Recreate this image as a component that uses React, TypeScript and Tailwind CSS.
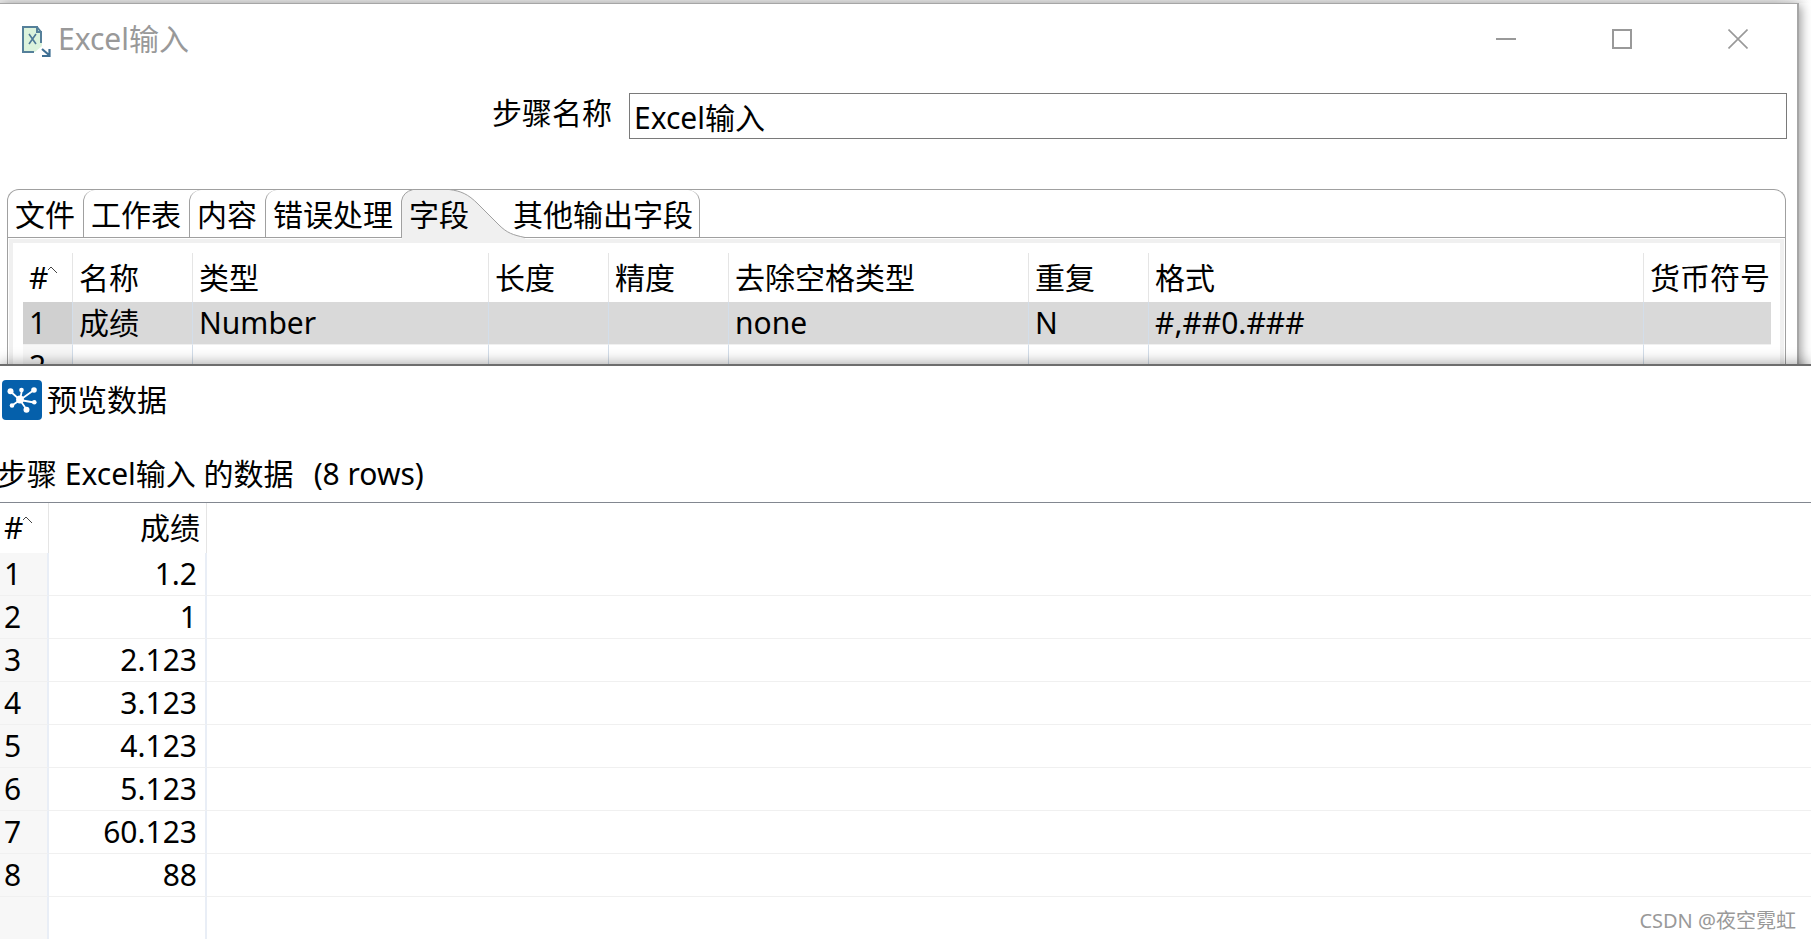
import { useState } from "react";

type Column = {
  label: string;
  width: string;
};

const columns: Column[] = [
  { label: "名称", width: "w-[120px]" },
  { label: "类型", width: "w-[296px]" },
  { label: "长度", width: "w-[120px]" },
  { label: "精度", width: "w-[120px]" },
  { label: "去除空格类型", width: "w-[300px]" },
  { label: "重复", width: "w-[120px]" },
  { label: "格式", width: "" },
  { label: "货币符号", width: "w-[127px]" },
];

const fields = [
  ["成绩", "Number", "", "", "none", "N", "#,##0.###", ""],
  ["", "", "", "", "", "", "", ""],
];

const scores = ["1.2", "1", "2.123", "3.123", "4.123", "5.123", "60.123", "88"];

const tabs = ["文件", "工作表", "内容", "错误处理", "字段", "其他输出字段"];

function ExcelIcon() {
  return (
    <svg width="30" height="36" viewBox="0 -4 30 36" fill="none">
      <path d="M1 2h14l5 5v14l-7 6H1z" fill="#dcf3dc" />
      <path d="M12 27H1V2h14v5h4v11M15 2l4 5" stroke="#55809a" strokeWidth="2" />
      <path d="M7 9l7 10M14 9L7 19" stroke="#4d7896" strokeWidth="1.6" />
      <path d="M20 24l7 6M20 31h7.500V24" stroke="#3f6f93" strokeWidth="2.2" />
    </svg>
  );
}

function KettleIcon() {
  return (
    <svg width="40" height="40" viewBox="0 0 40 40">
      <rect width="40" height="40" rx="4" fill="#0560ab" />
      <g stroke="#fff" strokeWidth="1.8">
        <path d="M18 20L8 11M18 20l2-10M18 20L32 10M18 20l14 2.500M18 20l6.500 9.500M18 20l-8 5.500" />
      </g>
      <g fill="#fff">
        <circle cx="18" cy="19.500" r="3.900" />
        <circle cx="8.500" cy="11.300" r="3" />
        <circle cx="19.500" cy="10" r="2.300" />
        <circle cx="32" cy="10" r="2.800" />
        <circle cx="32.300" cy="22.300" r="2.300" />
        <circle cx="24.500" cy="29.700" r="3" />
        <circle cx="10" cy="25.500" r="2.300" />
      </g>
    </svg>
  );
}

function SortHeader() {
  return (
    <span className="flex items-start">
      #
      <svg className="mt-2" width="10" height="8" viewBox="0 0 10 8" fill="none">
        <path d="M0 4l3-3 6 6" stroke="#444" strokeWidth="1" />
      </svg>
    </span>
  );
}

export default function App() {
  const [stepName, setStepName] = useState("Excel输入");
  const [activeTab, setActiveTab] = useState("字段");

  return (
    <div className="relative min-h-screen overflow-hidden bg-white font-['Noto_Sans','Noto_Sans_CJK_SC',sans-serif] text-[30px] leading-10 text-black">
      <div className="bg-linear-to-r from-[#e6e6e6] from-98% to-white pt-[3px]">
        <div className="bg-white pr-3">
          <section className="border-t border-r-2 border-[#a6a6a6] bg-white shadow-[2px_2px_10px_rgba(0,0,0,0.4)]">
            <header className="flex h-[70px] items-center pr-px pl-[22px] text-[#999]">
              <ExcelIcon />
              <h1 className="ml-1.5 grow">Excel输入</h1>
              <button type="button" aria-label="最小化" className="flex h-full w-[116px] items-center justify-center">
                <svg width="20" height="20" viewBox="0 0 20 20">
                  <path d="M0 10h20" stroke="#999" strokeWidth="2" />
                </svg>
              </button>
              <button type="button" aria-label="最大化" className="flex h-full w-[116px] items-center justify-center">
                <svg width="20" height="20" viewBox="0 0 20 20" fill="none">
                  <path d="M1 1h18v18H1z" stroke="#999" strokeWidth="2" />
                </svg>
              </button>
              <button type="button" aria-label="关闭" className="flex h-full w-[116px] items-center justify-center">
                <svg width="20" height="20" viewBox="0 0 20 20">
                  <path d="M0.500 0.500l19 19M19.500 0.500l-19 19" stroke="#999" strokeWidth="1.600" />
                </svg>
              </button>
            </header>

            <div className="mt-[19px] flex items-start pr-[10px] pl-[492px]">
              <label htmlFor="step-name" className="mr-[17px] shrink-0">
                步骤名称
              </label>
              <input
                id="step-name"
                value={stepName}
                onChange={(e) => setStepName(e.target.value)}
                className="h-[46px] min-w-0 grow border border-[#7a7a7a] px-1 outline-none"
              />
            </div>

            <div className="mt-[50px] mr-[11px] ml-[7px] rounded-t-[12px] border border-b-0 border-[#a0a0a0]">
              <div role="tablist" className="flex h-12 border-b border-[#a0a0a0]">
                {tabs.map((tab, i) => (
                  <button
                    key={tab}
                    type="button"
                    role="tab"
                    aria-selected={tab === activeTab}
                    onClick={() => setActiveTab(tab)}
                    className={
                      tab === activeTab
                        ? "relative h-12 w-[104px] pt-0.5 pl-2 text-left"
                        : i === tabs.length - 1
                        ? "rounded-tr-[12px] border-r border-[#a0a0a0] pt-0.5 pr-[6px] pl-2"
                        : i === 0
                        ? "pt-0.5 pr-2 pl-[7px]"
                        : "rounded-tl-[12px] border-l border-[#a0a0a0] pt-0.5 pr-2 pl-[7px]"
                    }
                  >
                    {tab === activeTab && (
                      <svg
                        className="absolute top-[-1px] left-0"
                        width="126"
                        height="50"
                        viewBox="0 0 126 50"
                        fill="none"
                      >
                        <path
                          d="M0.500 50V12Q2 3 12 0.500H48C60 2 67 5 77 15L98 36C106 44 112 46 124 48.500V50z"
                          fill="#f0f0f0"
                        />
                        <path
                          d="M0.500 49V12Q2 3 12 0.500H48C60 2 67 5 77 15L98 36C106 44 112 46 124 48.500"
                          stroke="#a0a0a0"
                        />
                      </svg>
                    )}
                    <span className="relative">{tab}</span>
                  </button>
                ))}
              </div>

              <div className="m-px mb-0 border-4 border-b-0 border-[#f0f0f0] pt-[10px] pr-[9px] pl-[10px]">
                <table className="w-full table-fixed border-separate border-spacing-0 text-left whitespace-nowrap">
                  <thead>
                    <tr className="h-[49px]">
                      <th className="w-[50px] border-r border-[#e5e5e5] pl-[6px] font-normal">
                        <SortHeader />
                      </th>
                      {columns.map((col) => (
                        <th
                          key={col.label}
                          className={`${col.width} border-r border-[#e5e5e5] pl-[6px] font-normal last:border-r-0`}
                        >
                          {col.label}
                        </th>
                      ))}
                    </tr>
                  </thead>
                  <tbody>
                    {fields.map((row, i) => (
                      <tr key={i} className={i === 0 ? "h-[43px] bg-[#d9d9d9]" : "h-[43px]"}>
                        <td
                          className={`border-r border-b border-r-[#d3deea] border-b-[#f0f0f0] pl-[6px] ${
                            i === 0 ? "bg-[#d0d0d0]" : "bg-[#f7f7f7]"
                          }`}
                        >
                          {i + 1}
                        </td>
                        {row.map((cell, j) => (
                          <td
                            key={j}
                            className="border-r border-b border-r-[#d3deea] border-b-[#f0f0f0] pl-[6px] last:border-r-0"
                          >
                            {cell}
                          </td>
                        ))}
                      </tr>
                    ))}
                  </tbody>
                </table>
              </div>
            </div>
          </section>
        </div>
      </div>

      {/* preview dialog covers the lower part of the step window */}
      <section className="relative -mt-[24px] border-t-2 border-[#6d6d6d] bg-white shadow-[0_0_14px_rgba(0,0,0,0.4)]">
        <header className="flex items-center gap-[5px] pt-[14px] pl-[2px]">
          <KettleIcon />
          <h2>预览数据</h2>
        </header>
        <p className="mt-[34px] -ml-[3px] flex gap-5">
          <span>步骤 Excel输入 的数据</span>
          <span>(8 rows)</span>
        </p>
        <table className="mt-2 w-full table-fixed border-separate border-spacing-0 border-t border-[#828790]">
          <thead>
            <tr className="h-[50px]">
              <th className="w-[49px] border-r border-[#e5e5e5] pl-1 font-normal">
                <SortHeader />
              </th>
              <th className="w-[158px] border-r border-[#e5e5e5] pr-[6px] text-right font-normal">成绩</th>
              <th />
            </tr>
          </thead>
          <tbody>
            {scores.map((score, i) => (
              <tr key={i} className="h-[43px]">
                <td className="border-r-2 border-b border-r-[#e9eef6] border-b-[#f0f0f0] bg-[#f7f7f7] pl-1">
                  {i + 1}
                </td>
                <td className="border-r-2 border-b border-r-[#e9eef6] border-b-[#f0f0f0] pr-2 text-right">{score}</td>
                <td className="border-b border-[#f0f0f0]" />
              </tr>
            ))}
            <tr className="h-[42px]">
              <td className="border-r-2 border-[#e9eef6] bg-[#f7f7f7]" />
              <td className="border-r-2 border-[#e9eef6]" />
              <td />
            </tr>
          </tbody>
        </table>
        <span className="absolute right-[15px] bottom-1 text-xl leading-7 text-[#999]">CSDN @夜空霓虹</span>
      </section>
    </div>
  );
}
